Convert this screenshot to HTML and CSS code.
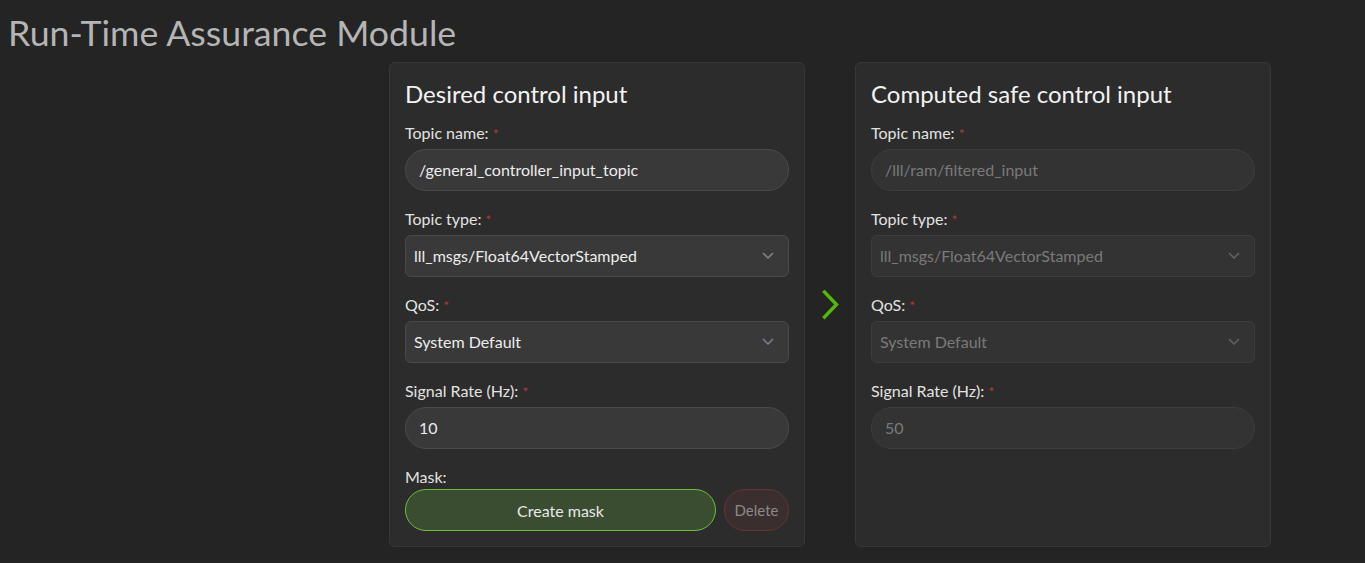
FILE: index.html
```html
<!DOCTYPE html>
<html lang="en">
<head>
<meta charset="utf-8">
<title>Run-Time Assurance Module</title>
<link rel="stylesheet" href="styles.css">
</head>
<body>
<h1 class="page-title">Run-Time Assurance Module</h1>
<div class="layout">
  <section class="card">
    <h2 class="card-title">Desired control input</h2>
    <div class="field">
      <label class="label">Topic name: <span class="req">*</span></label>
      <div class="input pill">/general_controller_input_topic</div>
    </div>
    <div class="field">
      <label class="label">Topic type: <span class="req">*</span></label>
      <div class="input select"><span>lll_msgs/Float64VectorStamped</span>
        <svg class="caret" width="12" height="7" viewBox="0 0 12 7"><polyline points="1,1 6,6 11,1" fill="none" stroke="currentColor" stroke-width="1.6"/></svg>
      </div>
    </div>
    <div class="field">
      <label class="label">QoS: <span class="req">*</span></label>
      <div class="input select"><span>System Default</span>
        <svg class="caret" width="12" height="7" viewBox="0 0 12 7"><polyline points="1,1 6,6 11,1" fill="none" stroke="currentColor" stroke-width="1.6"/></svg>
      </div>
    </div>
    <div class="field">
      <label class="label">Signal Rate (Hz): <span class="req">*</span></label>
      <div class="input pill">10</div>
    </div>
    <div class="field mask">
      <label class="label">Mask:</label>
      <div class="btn-row">
        <button class="btn btn-create">Create mask</button>
        <button class="btn btn-delete">Delete</button>
      </div>
    </div>
  </section>
  <div class="arrow">
    <svg width="18" height="30" viewBox="0 0 18 30"><polyline points="2.5,2 14.5,14.5 2.5,27" fill="none" stroke="#52b80a" stroke-width="3.4" stroke-linecap="square"/></svg>
  </div>
  <section class="card">
    <h2 class="card-title">Computed safe control input</h2>
    <div class="field">
      <label class="label">Topic name: <span class="req">*</span></label>
      <div class="input pill disabled">/lll/ram/filtered_input</div>
    </div>
    <div class="field">
      <label class="label">Topic type: <span class="req">*</span></label>
      <div class="input select disabled"><span>lll_msgs/Float64VectorStamped</span>
        <svg class="caret" width="12" height="7" viewBox="0 0 12 7"><polyline points="1,1 6,6 11,1" fill="none" stroke="currentColor" stroke-width="1.6"/></svg>
      </div>
    </div>
    <div class="field">
      <label class="label">QoS: <span class="req">*</span></label>
      <div class="input select disabled"><span>System Default</span>
        <svg class="caret" width="12" height="7" viewBox="0 0 12 7"><polyline points="1,1 6,6 11,1" fill="none" stroke="currentColor" stroke-width="1.6"/></svg>
      </div>
    </div>
    <div class="field">
      <label class="label">Signal Rate (Hz): <span class="req">*</span></label>
      <div class="input pill disabled">50</div>
    </div>
  </section>
</div>
</body>
</html>
```
FILE: styles.css
```css
* { box-sizing: border-box; }
html, body { height: 100%; }
body {
  margin: 8px;
  background: #242424;
  font-family: Lato, "Open Sans", sans-serif;
  color: #e4e4e4;
  overflow: hidden;
}
.page-title {
  margin: 4px 0 0 0;
  font-size: 35.7px;
  font-weight: 400;
  line-height: 42px;
  color: #b5b5b5;
}
.layout {
  display: flex;
  align-items: stretch;
  margin-top: 8px;
  padding-left: 381px;
}
.card {
  width: 416px;
  height: 485px;
  background: #2c2c2c;
  border: 1px solid #383838;
  border-radius: 6px;
  padding: 16px 15px 15px 15px;
}
.card-title {
  margin: 0 0 16px 0;
  font-size: 24px;
  font-weight: 400;
  line-height: 29px;
  color: #f2f2f2;
}
.field { display: flex; flex-direction: column; margin-bottom: 19px; }
.field.mask { margin-bottom: 0; }
.label {
  display: block;
  height: 20px;
  font-size: 16px;
  line-height: 18px;
  color: #e2e2e2;
  margin-bottom: 5px;
}
.mask .label { margin-bottom: 1px; }
.req { color: #b03a3a; font-size: 14px; line-height: 0; }
.input {
  height: 42px;
  display: flex;
  align-items: center;
  background: #393939;
  border: 1px solid #4a4a4a;
  font-size: 16px;
  color: #ececec;
  padding-bottom: 1px;
}
.pill { border-radius: 21px; padding-left: 13px; padding-right: 13px; }
.select { border-radius: 6px; padding-left: 8px; padding-right: 14px; justify-content: space-between; }
.caret { color: #7c808c; }
.input.disabled {
  background: #333333;
  border-color: #3d3d3d;
  color: #7a7a7a;
}
.input.disabled .caret { color: #5e616a; }
.btn-row { display: flex; gap: 8px; }
.btn {
  height: 42px;
  border-radius: 21px;
  font-family: Lato, sans-serif;
  font-size: 16px;
}
.btn-create {
  flex: 1;
  background: #3a4d30;
  border: 1px solid #6cbf38;
  color: #e8e8e8;
}
.btn-delete {
  width: 65px;
  background: #3a2e2e;
  border: 1px solid #6a3333;
  color: #8a8a8a;
  font-size: 15px;
  padding: 0;
}
.arrow {
  width: 50px;
  display: flex;
  align-items: center;
  justify-content: center;
  padding-left: 1px;
}
```
